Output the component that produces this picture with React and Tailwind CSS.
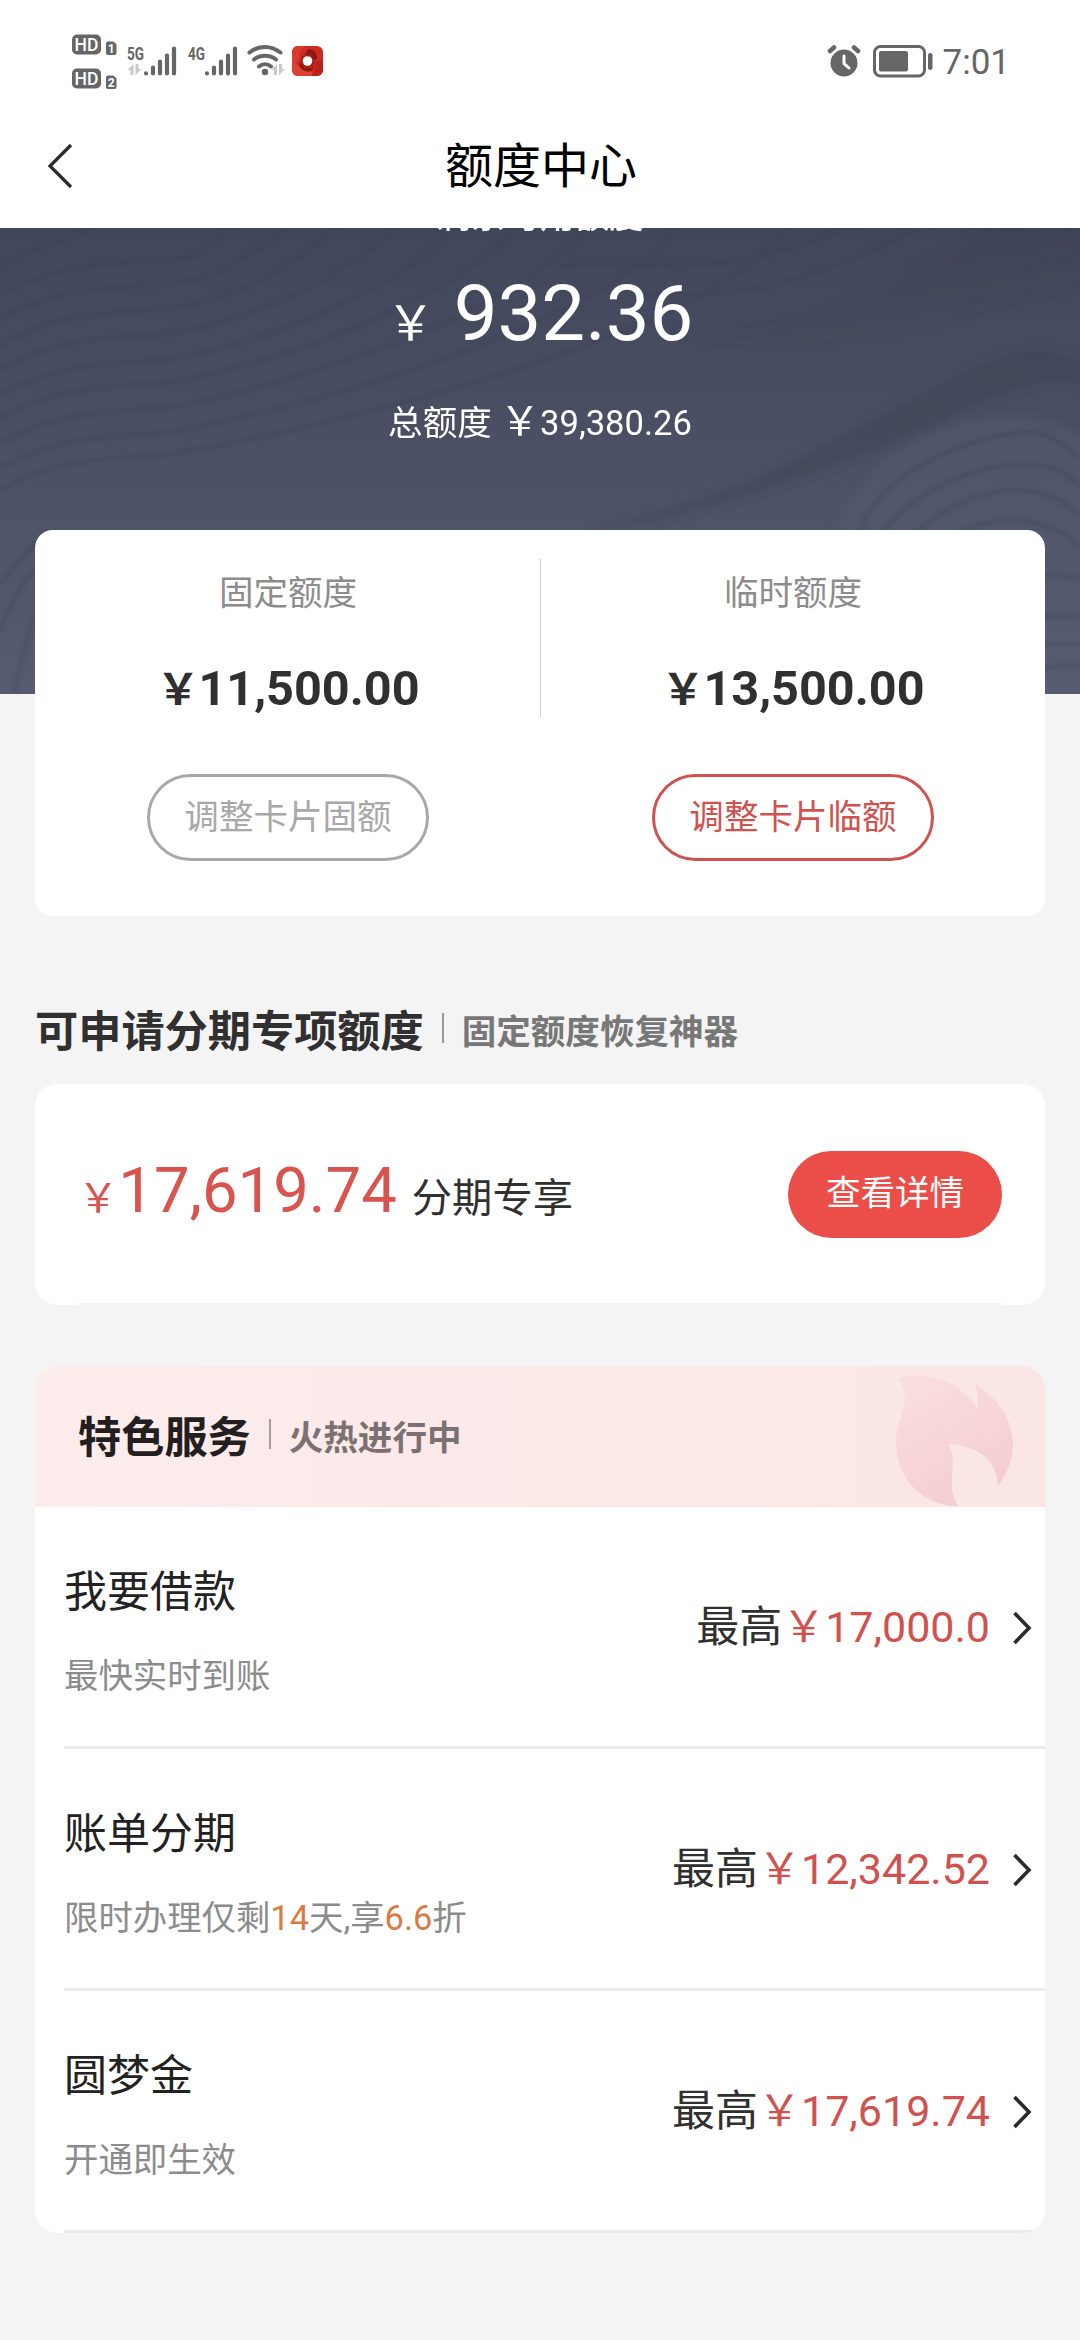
import React from 'react';

const LIMITS = [
  { label: '固定额度', amount: '11,500.00', action: '调整卡片固额', active: false },
  { label: '临时额度', amount: '13,500.00', action: '调整卡片临额', active: true },
];

const SERVICES = [
  { title: '我要借款', desc: '最快实时到账', amount: '17,000.0' },
  {
    title: '账单分期',
    desc: (
      <>
        限时办理仅剩<span className="text-[#d97b45]">14</span>天,享<span className="text-[#d97b45]">6.6</span>折
      </>
    ),
    amount: '12,342.52',
  },
  { title: '圆梦金', desc: '开通即生效', amount: '17,619.74' },
];

const HdBadge = ({ n }) => (
  <svg width="46" height="24" viewBox="0 0 46 24">
    <rect x="0" y="0.5" width="29" height="20" rx="5" fill="#666" />
    <text x="14.5" y="16.6" textAnchor="middle" fontFamily="Roboto, sans-serif" fontSize="17.5" fontWeight="500" fill="#fff" textLength="24">
      HD
    </text>
    <path d="M36 7.5h5.5l3 3V19a2 2 0 0 1-2 2H36a2 2 0 0 1-2-2V9.5a2 2 0 0 1 2-2z" fill="#666" />
    <text x="39.2" y="19" textAnchor="middle" fontFamily="Roboto, sans-serif" fontSize="12" fontWeight="700" fill="#fff">
      {n}
    </text>
  </svg>
);

const DataArrows = ({ x, y }) => (
  <path transform={`translate(${x} ${y})`} d="M6 11V0L0 6h3v5zM8 0v11l6-6h-3V0z" fill="#c8c8c8" />
);

const Signal = ({ label, arrows }) => (
  <svg width="50" height="34" viewBox="0 0 50 34">
    <text x="0" y="15.5" fontFamily="Roboto, sans-serif" fontSize="18" fontWeight="700" fill="#666" textLength="17" lengthAdjust="spacingAndGlyphs">
      {label}
    </text>
    {arrows && <DataArrows x={0.5} y={20} />}
    <g stroke="#666" strokeWidth="4.2" strokeLinecap="round">
      <path d="M19 29.3v.2M26 23.5v6M33 17.5v12M40 11.5v18M47 4.5v25" />
    </g>
  </svg>
);

const StatusBar = () => (
  <div className="flex h-[112px] items-start justify-between pl-[72px] pr-[72px] text-[#666]">
    <div className="flex items-start">
      <div className="flex flex-col gap-[10px] pt-[34px]">
        <HdBadge n="1" />
        <HdBadge n="2" />
      </div>
      <div className="ml-[9px] flex pt-[44px]">
        <Signal label="5G" arrows />
        <div className="ml-[11px]">
          <Signal label="4G" />
        </div>
        <svg className="ml-[9px]" width="38" height="34" viewBox="0 0 38 34" fill="none" stroke="#666" strokeWidth="4" strokeLinecap="round">
          <path d="M2.5 8.5C12 1 24 1 33.5 8.5M7 15.5c6.500-5 15.500-5 22 0M12 22.500c3.500-3 8.500-3 12 0" />
          <circle cx="18" cy="28" r="3.2" fill="#666" stroke="none" />
          <g stroke="none">
            <DataArrows x={24} y={20} />
          </g>
        </svg>
        <svg className="ml-[7px] mt-[2px]" width="31" height="30" viewBox="0 0 31 30">
          <rect width="31" height="30" rx="6" fill="#cf2a20" />
          <path d="M0 24V6a6 6 0 0 1 6-6h10c-7 1-10 6-8 12z" fill="#d93a2c" />
          <path d="M16 3c6 0 9 4 9 10l-4 2c0-4-4-7-9-5z" fill="#8f1711" />
          <path d="M31 14v10a6 6 0 0 1-6 6h-7c5-3 7-8 4-14z" fill="#b9231a" />
          <path d="M20 30H6a6 6 0 0 1-6-6V12c4 8 9 11 20 8z" fill="#dd4033" />
          <path d="M8 16c2 6 8 8 14 4l-2 5c-6 2-11-1-13-6z" fill="#8f1711" />
          <circle cx="15.5" cy="15" r="7" fill="#a81d15" />
          <circle cx="15.5" cy="15" r="4.8" fill="#fff" />
        </svg>
      </div>
    </div>
    <div className="flex items-start pt-[45px]">
      <svg width="34" height="32" viewBox="0 0 34 32">
        <circle cx="17" cy="18" r="13.5" fill="#666" />
        <path d="M3 6l4-3.500M31 6l-4-3.500" stroke="#666" strokeWidth="4.5" strokeLinecap="round" />
        <path d="M17 11v7.500l5 4.500" stroke="#fff" strokeWidth="3" fill="none" strokeLinecap="round" />
      </svg>
      <svg className="ml-[12px]" width="61" height="33" viewBox="0 0 61 33">
        <rect x="1.5" y="1.5" width="50" height="29.5" rx="6" fill="none" stroke="#666" strokeWidth="3" />
        <rect x="6" y="6" width="29" height="20.5" rx="2" fill="#666" />
        <rect x="55" y="8" width="4.5" height="17" rx="2.2" fill="#666" />
      </svg>
      <span className="mr-[-2px] ml-[9px] text-[35px] leading-[35px]">7:01</span>
    </div>
  </div>
);

// [startY, endX] of each contour that runs up from the left edge
const CONTOURS = [
  [42, 110], [67, 245], [91, 295], [116, 345], [141, 400], [167, 460], [190, 520],
  [215, 590], [240, 680], [262, 790],
];

const Waves = () => (
  <svg className="absolute inset-0" width="1080" height="466" viewBox="0 0 1080 466" fill="none">
    <defs>
      <linearGradient id="ridge" x1="0" y1="0" x2="0.5" y2="1">
        <stop offset="0" stopColor="#3b3f52" stopOpacity="0.9" />
        <stop offset="1" stopColor="#3b3f52" stopOpacity="0" />
      </linearGradient>
      <filter id="soft" x="-10%" y="-10%" width="120%" height="120%">
        <feGaussianBlur stdDeviation="5" />
      </filter>
      <filter id="line">
        <feGaussianBlur stdDeviation="1.5" />
      </filter>
    </defs>
    <g filter="url(#soft)">
      <path d="M1090 -10H1000C930 30 880 70 800 90S700 102 660 100C800 150 960 80 1090 60z" fill="url(#ridge)" opacity="0.6" />
      <path d="M1090 140C1060 120 1030 118 990 134S860 200 790 235 680 275 590 305C720 280 800 250 880 220S1030 135 1090 160z" fill="#3b3f52" opacity="0.5" />
      <path d="M838 310C835 270 880 225 940 202S1050 185 1090 215V466H838z" fill="#575c72" opacity="0.45" />
    </g>
    <g stroke="#3c4055" strokeWidth="4" opacity="0.27" filter="url(#line)">
      {CONTOURS.map(([y, x]) => (
        <path
          key={y}
          d={
            y === 42
              ? 'M0 42C40 15 70 8 110 -6'
              : `M0 ${y}C60 ${y - 32} 100 ${y - 30} 160 ${y - 35}S${x - 70} ${y * 0.45} ${x} -6`
          }
        />
      ))}
      <path d="M560 38C640 30 700 50 780 22S840 5 860 -4M640 66C720 70 780 60 840 35S900 5 930 -4M0 356C10 345 20 330 36 315M0 405C8 380 20 355 38 340M14 466C20 440 28 400 40 380" />
      <path d="M858 310C870 260 930 225 990 210S1060 215 1080 230M880 310C900 275 960 240 1010 237S1070 250 1080 258M910 310C940 280 980 262 1015 262S1070 278 1080 288M950 310C990 285 1040 285 1080 318M1040 345L1080 350M1040 388H1080M1040 416H1080M1040 440L1080 436" />
    </g>
  </svg>
);

const Chevron = () => (
  <svg className="ml-[22px]" width="21" height="34" viewBox="0 0 21 34" fill="none" stroke="#2b2b2b" strokeWidth="3.6">
    <path d="M2.5 2L17 17 2.5 32" />
  </svg>
);

const LimitColumn = ({ label, amount, action, active }) => (
  <div className="flex flex-1 flex-col items-center pt-[41px]">
    <div className="h-[44px] text-[34.56px] leading-[44px] text-[#8c8c8c]">{label}</div>
    <div className="mt-[42px] flex h-[64px] items-baseline text-[48.6px] font-bold leading-[64px] text-[#303030]">
      <span className="mr-[-1px] text-[43px]">￥</span>
      {amount}
    </div>
    <button
      className={
        active
          ? 'mt-[53px] h-[87px] w-[282px] rounded-full border-[3px] border-[#d0524f] text-[34.56px] text-[#d0524f]'
          : 'mt-[53px] h-[87px] w-[282px] rounded-full border-[3px] border-[#a8a8a8] text-[34.56px] text-[#a8a8a8]'
      }
    >
      {action}
    </button>
  </div>
);

const App = () => (
  <div className="h-[2340px] w-[1080px] overflow-hidden bg-[#f4f4f4] font-[Roboto,'Noto_Sans_CJK_SC',sans-serif]">
    <div className="bg-white">
      <StatusBar />
      <header className="flex h-[116px] items-center pl-[46px] pb-[6px]">
        <svg className="mt-[-2px]" width="28" height="46" viewBox="0 0 28 46" fill="none" stroke="#2b2b2b" strokeWidth="3.2">
          <path d="M25 2L4 23l21 21" />
        </svg>
        <h1 className="mr-[72px] flex-1 text-center text-[48px] leading-[64px] text-black">额度中心</h1>
      </header>
    </div>

    <section className="relative flex h-[466px] flex-col items-center overflow-hidden bg-linear-to-b from-[#41465a] to-[#565b70] text-white">
      <Waves />
      <div className="relative mt-[-32px] h-[40px] shrink-0 text-[34.56px] font-medium leading-[40px]">剩余可用额度</div>
      <div className="relative mt-[28px] flex items-baseline leading-[100px]">
        <span className="text-[48px]">￥</span>
        <span className="ml-[19px] text-[78px]">932.36</span>
      </div>
      <div className="relative mt-[20px] flex items-baseline text-[34.56px] leading-[56px]">
        总额度
        <span className="ml-[8px] text-[40.32px]">￥</span>
        39,380.26
      </div>
    </section>

    <main className="px-[35px]">
      <section className="relative mt-[-164px] flex h-[386px] rounded-[18px] bg-white pl-[1px]">
        <LimitColumn {...LIMITS[0]} />
        <div className="mt-[29px] h-[158px] w-[1px] bg-[#d0d0d0]" />
        <LimitColumn {...LIMITS[1]} />
      </section>

      <div className="mt-[86px] flex h-[62px] items-center">
        <h2 className="text-[43.2px] font-bold leading-[62px] text-[#303030]">可申请分期专项额度</h2>
        <div className="mx-[18px] mt-[-10px] h-[30px] w-[2px] bg-[#9a9a9a]" />
        <span className="text-[34.56px] font-bold text-[#777]">固定额度恢复神器</span>
      </div>

      <section className="relative mt-[20px] flex h-[221px] items-center justify-between rounded-[22px] bg-white pb-[1px] pl-[43px] pr-[43px]">
        <div className="flex items-baseline leading-[80px]">
          <span className="text-[40.32px] text-[#d9534f]">￥</span>
          <span className="text-[63.36px] text-[#d9534f]">17,619.74</span>
          <span className="ml-[15px] text-[40.32px] text-[#303030]">分期专享</span>
        </div>
        <button className="h-[87px] w-[214px] rounded-full bg-[#eb4e49] text-[34.56px] text-white">查看详情</button>
        <div className="absolute inset-x-[43px] bottom-0 h-[2px] bg-[#f4f4f4]" />
      </section>

      <section className="mt-[61px] overflow-hidden rounded-[22px] bg-white">
        <div className="flex h-[141px] items-center bg-linear-to-r from-[#fcecec] to-[#fae6e5] pl-[43px]">
          <h2 className="pt-[5px] text-[43.2px] font-bold text-[#231f20]">特色服务</h2>
          <div className="mx-[18px] mt-[-6px] h-[30px] w-[2px] bg-[#a79c9c]" />
          <span className="pt-[4px] text-[34.56px] font-bold text-[#7c7172]">火热进行中</span>
          <svg className="ml-auto mr-[31px]" width="118" height="141" viewBox="0 0 118 141">
            <defs>
              <linearGradient id="flame" x1="0.2" y1="0" x2="0.7" y2="1">
                <stop offset="0" stopColor="#f9dedf" />
                <stop offset="1" stopColor="#f4ccd1" />
              </linearGradient>
            </defs>
            <path
              d="M2 12C32 6 62 12 81 43C83 35 82 26 79 18C102 32 117 54 117 79C117 95 110 109 102 120C101 95 83 79 52 78C64 95 48 118 62 140C26 140 0 112 0 77C0 50 18 33 2 12z"
              fill="url(#flame)"
            />
          </svg>
        </div>
        <div className="pl-[29px]">
          {SERVICES.map((s) => (
            <div key={s.title} className="flex h-[242px] items-center justify-between border-b-[3px] border-[#ebebeb] pr-[12px]">
              <div className="flex flex-col gap-[29px] pt-[9px]">
                <div className="text-[43px] leading-[60px] text-[#222]">{s.title}</div>
                <div className="text-[34.4px] leading-[50px] text-[#8c8c8c]">{s.desc}</div>
              </div>
              <div className="flex items-center pt-[2px] text-[43px] text-[#303030]">
                <span>最高</span>
                <span className="text-[#d0524f]">￥{s.amount}</span>
                <Chevron />
              </div>
            </div>
          ))}
        </div>
      </section>
    </main>
  </div>
);

export default App;
